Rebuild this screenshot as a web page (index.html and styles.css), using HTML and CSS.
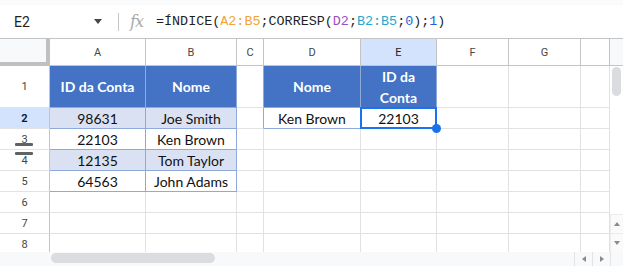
FILE: index.html
```html
<!DOCTYPE html>
<html lang="pt">
<head>
    <meta charset="UTF-8">
    <title>Planilha</title>
    <link rel="stylesheet" href="styles.css">
</head>
<body>
    <div class="top-strip"></div>
    <div class="fbar">
        <div class="namebox">
            <span>E2</span>
            <span class="caret"></span>
        </div>
        <div class="sep"></div>
        <div class="fx">fx</div>
        <div class="formula">=ÍNDICE(<span class="rg1">A2:B5</span>;CORRESP(<span class="rg2">D2</span>;<span class="rg3">B2:B5</span>;<span class="num">0</span>);<span class="num">1</span>)</div>
    </div>
    <div class="sheet">
        <div class="grid">
            <!-- column headers -->
            <div class="c corner"></div>
            <div class="c h">A</div>
            <div class="c h">B</div>
            <div class="c h">C</div>
            <div class="c h">D</div>
            <div class="c h sel-h">E</div>
            <div class="c h">F</div>
            <div class="c h">G</div>
            <div class="c h"></div>

            <!-- row 1 -->
            <div class="c r">1</div>
            <div class="c th">ID da Conta</div>
            <div class="c th">Nome</div>
            <div class="c edge"></div>
            <div class="c th">Nome</div>
            <div class="c th">ID da<br>Conta</div>
            <div class="c"></div>
            <div class="c"></div>
            <div class="c"></div>

            <!-- row 2 -->
            <div class="c r sel-r">2</div>
            <div class="c td band">98631</div>
            <div class="c td band">Joe Smith</div>
            <div class="c edge"></div>
            <div class="c td">Ken Brown</div>
            <div class="c td active">22103<span class="handle"></span></div>
            <div class="c"></div>
            <div class="c"></div>
            <div class="c"></div>

            <!-- row 3 -->
            <div class="c r">3</div>
            <div class="c td">22103</div>
            <div class="c td">Ken Brown</div>
            <div class="c"></div>
            <div class="c"></div>
            <div class="c"></div>
            <div class="c"></div>
            <div class="c"></div>
            <div class="c"></div>

            <!-- row 4 -->
            <div class="c r">4</div>
            <div class="c td band">12135</div>
            <div class="c td band">Tom Taylor</div>
            <div class="c"></div>
            <div class="c"></div>
            <div class="c"></div>
            <div class="c"></div>
            <div class="c"></div>
            <div class="c"></div>

            <!-- row 5 -->
            <div class="c r">5</div>
            <div class="c td">64563</div>
            <div class="c td">John Adams</div>
            <div class="c"></div>
            <div class="c"></div>
            <div class="c"></div>
            <div class="c"></div>
            <div class="c"></div>
            <div class="c"></div>

            <!-- row 6 -->
            <div class="c r">6</div>
            <div class="c"></div>
            <div class="c"></div>
            <div class="c"></div>
            <div class="c"></div>
            <div class="c"></div>
            <div class="c"></div>
            <div class="c"></div>
            <div class="c"></div>

            <!-- row 7 -->
            <div class="c r">7</div>
            <div class="c"></div>
            <div class="c"></div>
            <div class="c"></div>
            <div class="c"></div>
            <div class="c"></div>
            <div class="c"></div>
            <div class="c"></div>
            <div class="c"></div>

            <!-- row 8 -->
            <div class="c r">8</div>
            <div class="c"></div>
            <div class="c"></div>
            <div class="c"></div>
            <div class="c"></div>
            <div class="c"></div>
            <div class="c"></div>
            <div class="c"></div>
            <div class="c"></div>
        </div>
        <div class="vbar">
            <div class="vbar-head"></div>
            <div class="vthumb"></div>
            <div class="spacer"></div>
            <div class="arrow-btn"><span class="tri up"></span></div>
            <div class="arrow-btn"><span class="tri down"></span></div>
        </div>
        <div class="freeze-handle">
            <span></span>
            <span></span>
        </div>
    </div>
    <div class="hbar">
        <div class="hbar-lead"></div>
        <div class="hthumb"></div>
        <div class="spacer"></div>
        <div class="harrow"><span class="tri left"></span></div>
        <div class="harrow"><span class="tri right"></span></div>
        <div class="hbar-corner"></div>
    </div>
</body>
</html>
```

FILE: styles.css
```css
:root {
    --grid-line: #e2e2e2;
    --head-line: #c4c4c4;
    --table-blue: #4472c4;
    --table-line: #8eaadb;
    --band: #d9e1f2;
    --select: #1a73e8;
    --select-bg: #d3e3fd;
    --panel: #f8f9fa;
}
* {
    box-sizing: border-box;
}
body {
    margin: 0;
    width: 623px;
    height: 266px;
    overflow: hidden;
    background: #ffffff;
    font-family: 'Roboto', 'Liberation Sans', sans-serif;
    color: #1f1f1f;
}
.top-strip {
    height: 5px;
    background: #f9fbfd;
}
.fbar {
    height: 34px;
    display: flex;
    align-items: center;
    border-bottom: 1px solid var(--head-line);
}
.namebox {
    width: 110px;
    padding-left: 14px;
    display: flex;
    align-items: center;
    justify-content: space-between;
    font-size: 14px;
    padding-right: 8px;
}
.caret {
    width: 0;
    height: 0;
    border-left: 4.5px solid transparent;
    border-right: 4.5px solid transparent;
    border-top: 5px solid #444746;
}
.sep {
    width: 1px;
    height: 18px;
    margin-left: 8px;
    background: #c4c7c5;
}
.fx {
    margin-left: 11px;
    width: 26px;
    font-family: 'DejaVu Serif', serif;
    font-style: italic;
    font-size: 16px;
    color: #a8a8a8;
    letter-spacing: -1px;
}
.formula {
    font-family: 'Liberation Mono', monospace;
    font-size: 13.4px;
    color: #1f1f1f;
    white-space: nowrap;
}
.rg1 { color: #f0a43a; }
.rg2 { color: #9e4fbd; }
.rg3 { color: #2aa6cb; }
.num { color: #1967d2; }

.sheet {
    position: relative;
    display: flex;
}
.grid {
    display: grid;
    grid-template-columns: 50px 96px 91px 27px 97px 76px 72px 72px 29px;
    grid-template-rows: 27px 42px repeat(7, 21px);
    height: 213px;
    width: 610px;
    overflow: hidden;
}
.c {
    border-right: 1px solid var(--grid-line);
    border-bottom: 1px solid var(--grid-line);
    display: flex;
    align-items: center;
    justify-content: center;
    font-family: 'Lato', sans-serif;
    font-size: 14px;
    color: #111;
}
.h, .r {
    font-family: 'Roboto', sans-serif;
    font-size: 11px;
    color: #444746;
    border-right-color: var(--head-line);
    border-bottom-color: var(--head-line);
}
.r {
    border-bottom-color: var(--grid-line);
}
.corner {
    background: var(--panel);
    border-right: 4px solid #c0c0c0;
    border-bottom: 4px solid #c0c0c0;
}
.sel-h {
    background: var(--select-bg);
    color: #1f1f1f;
}
.sel-r {
    background: var(--select-bg);
    color: #041e49;
    font-weight: bold;
}
.th {
    background: var(--table-blue);
    color: #ffffff;
    font-weight: bold;
    text-align: center;
    line-height: 21px;
    border-color: var(--table-line);
}
.td {
    border-color: var(--table-line);
}
.band {
    background: var(--band);
}
.edge {
    border-right-color: var(--table-line);
}
.active {
    position: relative;
}
.active::after {
    content: '';
    position: absolute;
    top: -1px;
    left: -1px;
    right: -1px;
    bottom: -1px;
    border: 2px solid var(--select);
}
.handle {
    position: absolute;
    right: -5px;
    bottom: -5px;
    width: 9px;
    height: 9px;
    border-radius: 50%;
    background: var(--select);
    z-index: 2;
}

.vbar {
    width: 13px;
    height: 213px;
    display: flex;
    flex-direction: column;
}
.vbar-head {
    height: 27px;
    background: var(--panel);
    border-bottom: 1px solid var(--head-line);
}
.vthumb {
    margin: 1px 0 0 2px;
    width: 9px;
    height: 29px;
    border-radius: 5px;
    background: #dadce0;
}
.spacer {
    flex: 1;
}
.arrow-btn {
    height: 19px;
    display: flex;
    align-items: center;
    justify-content: center;
    background: #fafafa;
    border-top: 1px solid #ececec;
    border-left: 1px solid #ececec;
}
.tri {
    width: 0;
    height: 0;
}
.tri.up {
    border-left: 3.5px solid transparent;
    border-right: 3.5px solid transparent;
    border-bottom: 4px solid #8a8a8a;
}
.tri.down {
    border-left: 3.5px solid transparent;
    border-right: 3.5px solid transparent;
    border-top: 4px solid #8a8a8a;
}
.tri.left {
    border-top: 3.5px solid transparent;
    border-bottom: 3.5px solid transparent;
    border-right: 4px solid #8a8a8a;
}
.tri.right {
    border-top: 3.5px solid transparent;
    border-bottom: 3.5px solid transparent;
    border-left: 4px solid #8a8a8a;
}
.freeze-handle {
    position: absolute;
    left: 15px;
    top: 104px;
    width: 18px;
    height: 12px;
    display: flex;
    flex-direction: column;
    justify-content: space-between;
}
.freeze-handle span {
    display: block;
    height: 3px;
    border-radius: 1px;
    background: #5f6368;
}

.hbar {
    height: 14px;
    display: flex;
    background: var(--panel);
}
.hbar-lead {
    width: 51px;
}
.hthumb {
    margin-top: 1px;
    width: 164px;
    height: 10px;
    border-radius: 5px;
    background: #dadce0;
}
.harrow {
    width: 18px;
    display: flex;
    align-items: center;
    justify-content: center;
    border-left: 1px solid #e3e3e3;
}
.hbar-corner {
    width: 13px;
    border-left: 1px solid #e3e3e3;
}
```
